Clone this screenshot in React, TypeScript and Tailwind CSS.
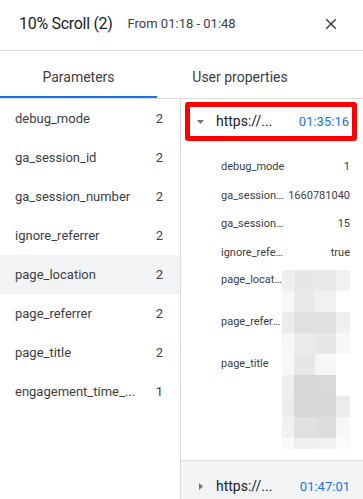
import React from "react";

const params: [string, number][] = [
  ["debug_mode", 2],
  ["ga_session_id", 2],
  ["ga_session_number", 2],
  ["ignore_referrer", 2],
  ["page_location", 2],
  ["page_referrer", 2],
  ["page_title", 2],
  ["engagement_time_msec", 1],
];

const eventRows: [string, string][] = [
  ["debug_mode", "1"],
  ["ga_session_id", "1660781040"],
  ["ga_session_number", "15"],
  ["ignore_referrer", "true"],
];

// pixelated (blurred) value block
const blobCols = [0, 12, 33, 54, 68];
const blobRows = [0, 21, 42, 63, 84, 105, 126, 147, 168, 179];
const blobColors = [
  ["#eeefef", "#e6e7e7", "#e8e9e9", "#f0f1f1"],
  ["#f6f7f8", "#e8e9e9", "#f1f1f1", "#ffffff"],
  ["#ebecec", "#dfe0e0", "#dfe0e0", "#eff0f0"],
  ["#f6f7f8", "#ebebeb", "#e6e7e7", "#f6f7f8"],
  ["#f6f7f8", "#e6e7e7", "#f6f6f6", "#ffffff"],
  ["#eeefef", "#d6d7d7", "#d8d9d9", "#ffffff"],
  ["#ebecec", "#d6d7d7", "#d6d7d7", "#ececec"],
  ["#f0f1f1", "#dfe0e0", "#dcdddd", "#f6f7f8"],
  ["#f8f9f9", "#eeefef", "#f1f1f1", "#fbfbfb"],
];

const Blob = () => (
  <svg width="68" height="179" className="mt-[3px] shrink-0">
    {blobColors.map((row, r) =>
      row.map((c, i) => (
        <rect
          key={`${r}-${i}`}
          x={blobCols[i]}
          y={blobRows[r]}
          width={blobCols[i + 1] - blobCols[i]}
          height={blobRows[r + 1] - blobRows[r]}
          fill={c}
        />
      ))
    )}
  </svg>
);

const CaretDown = () => (
  <svg width="7" height="4" viewBox="0 0 7 4" className="shrink-0">
    <polygon points="0,0 7,0 3.5,4" fill="#70757a" />
  </svg>
);

const CaretRight = () => (
  <svg width="4" height="7" viewBox="0 0 4 7" className="shrink-0">
    <polygon points="0,0 4,3.5 0,7" fill="#70757a" />
  </svg>
);

export default function App() {
  return (
    <div className="w-[363px] h-[512px] overflow-hidden bg-white flex flex-col font-['Roboto',sans-serif] text-[#3c4043]">
      {/* header */}
      <div className="h-[51px] shrink-0 border-b border-[#dadce0] flex items-center pl-[19px] pr-[23px] pb-[3px]">
        <span className="text-[16px] text-[#202124] tracking-[-0.3px]">10% Scroll (2)</span>
        <span className="text-[13px] text-[#3c4043] ml-[15px]">From 01:18 - 01:48</span>
        <button className="ml-auto text-[#3c4043]" aria-label="Close">
          <svg width="18" height="18" viewBox="0 0 24 24">
            <path
              fill="currentColor"
              d="M19 6.41L17.59 5 12 10.59 6.41 5 5 6.41 10.59 12 5 17.59 6.41 19 12 13.41 17.59 19 19 17.59 13.41 12z"
            />
          </svg>
        </button>
      </div>

      {/* tabs */}
      <div className="h-[48px] shrink-0 border-b border-[#dadce0] flex text-[14px]">
        <div className="w-[157px] flex items-center justify-center border-b-2 border-[#1a73e8] pt-[8px] text-[#3c4043]">
          Parameters
        </div>
        <div className="w-[166px] flex items-center justify-center pt-[6px] text-[#3c4043]">
          User properties
        </div>
      </div>

      <div className="flex flex-1 min-h-0">
        {/* parameter list */}
        <div className="w-[181px] shrink-0 border-r border-[#dadce0]">
          {params.map(([name, n]) => (
            <div
              key={name}
              className={`h-[39px] flex items-center pl-[15px] pr-[17px] text-[13px] ${
                name === "page_location" ? "bg-[#f1f3f4]" : ""
              }`}
            >
              <span className="truncate w-[125px]">
                {name === "engagement_time_msec" ? "engagement_time_..." : name}
              </span>
              <span className="ml-auto">{n}</span>
            </div>
          ))}
        </div>

        {/* events */}
        <div className="flex-1 flex flex-col min-w-0">
          <div className="mt-[3px] ml-[4px] mr-[6px] h-[39px] shrink-0 border-[5px] border-[#ff0000] rounded-[3px] flex items-center pl-[7px] pr-[3px]">
            <CaretDown />
            <span className="ml-[12px] text-[14px] text-[#202124]">https://...</span>
            <span className="ml-auto text-[13px] text-[#1a73e8]">01:35:16</span>
          </div>

          <div className="pt-[12px] pl-[40px] pr-[13px] text-[11px]">
            {eventRows.map(([k, v]) => (
              <div key={k} className="h-[28.5px] flex items-center">
                <span className="w-[64px] truncate">{k}</span>
                <span className="ml-auto">{v}</span>
              </div>
            ))}
            <div className="flex">
              <div className="w-[61px] flex flex-col">
                <div className="h-[42px] leading-[26px] truncate">page_location</div>
                <div className="h-[42px] leading-[26px] truncate">page_referrer</div>
                <div className="leading-[26px] truncate">page_title</div>
              </div>
              <Blob />
            </div>
          </div>

          <div className="flex-1" />

          <div className="h-[52px] shrink-0 border-t border-[#dadce0] bg-[#f1f3f4] flex items-center pl-[18px] pr-[13px]">
            <CaretRight />
            <span className="ml-[13px] text-[14px] text-[#202124]">https://...</span>
            <span className="ml-auto text-[13px] text-[#1a73e8]">01:47:01</span>
          </div>
        </div>
      </div>
    </div>
  );
}
